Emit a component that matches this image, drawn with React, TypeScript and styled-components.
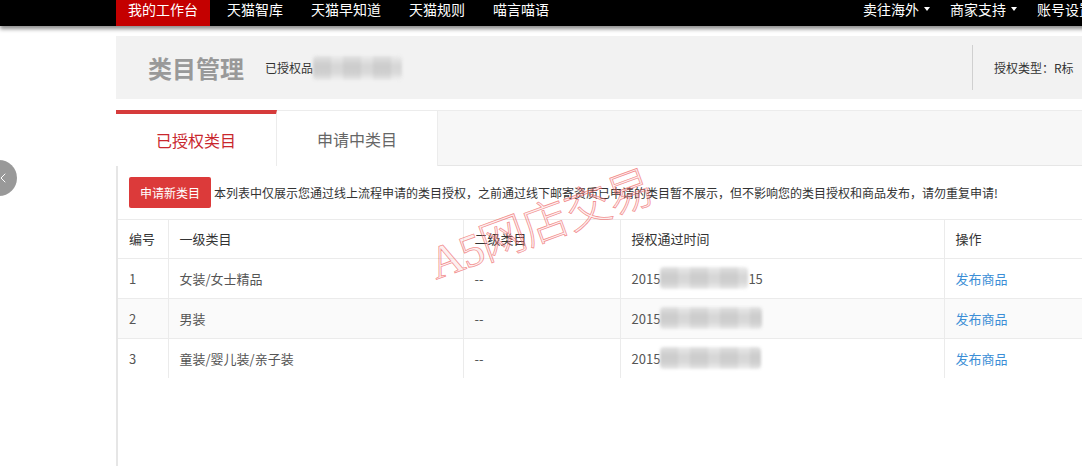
import React from 'react'
import styled, { createGlobalStyle } from 'styled-components'
import { ChevronLeft } from 'lucide-react'

const GlobalStyle = createGlobalStyle`
  html, body {
    margin: 0;
    padding: 0;
    background: #fff;
    overflow: hidden;
  }
  body {
    font-family: "Noto Sans CJK SC", "Microsoft YaHei", sans-serif;
    color: #333;
  }
`

const Page = styled.div`
  width: 1116px;
  position: relative;
`

const TopNav = styled.div`
  height: 26px;
  background: #000;
  display: flex;
  padding-left: 116px;
  box-shadow: 0 3px 4px rgba(0, 0, 0, 0.45);
  position: relative;
  z-index: 2;
`

const NavGroup = styled.div<{ $right?: boolean }>`
  display: flex;
  margin-left: ${({ $right }) => ($right ? 'auto' : '0')};
  margin-right: ${({ $right }) => ($right ? '2px' : '0')};
`

const NavItem = styled.div<{ $active?: boolean }>`
  display: flex;
  align-items: flex-start;
  gap: 5px;
  box-sizing: border-box;
  padding: 2px ${({ $active }) => ($active ? '12px' : '14px')} 0;
  margin-right: ${({ $active }) => ($active ? '3px' : '0')};
  background: ${({ $active }) => ($active ? '#c40000' : 'transparent')};
  color: #fff;
  font-size: 14px;
  line-height: 14px;
  height: 26px;
  white-space: nowrap;
`

const DropItem = styled(NavItem)`
  padding: 2px 10px 0;
`

const Caret = styled.span`
  width: 0;
  height: 0;
  margin-top: 5px;
  border-left: 3.5px solid transparent;
  border-right: 3.5px solid transparent;
  border-top: 4px solid #fff;
`

const Main = styled.div`
  margin-left: 116px;
  width: 1000px;
  padding-top: 10px;
`

const Header = styled.div`
  height: 63px;
  background: #f2f2f2;
  display: flex;
  align-items: center;
  padding-left: 32px;
`

const Title = styled.h1`
  margin: 0;
  font-size: 24px;
  font-weight: bold;
  color: #999;
  line-height: 30px;
`

const Sub = styled.div`
  margin-left: 21px;
  display: flex;
  align-items: center;
  font-size: 12px;
  color: #333;
`

const Blur = styled.span<{ $w: number; $h: number }>`
  display: inline-block;
  width: ${({ $w }) => $w}px;
  height: ${({ $h }) => $h}px;
  background:
    repeating-linear-gradient(90deg, rgba(0, 0, 0, 0.035) 0 18px, rgba(255, 255, 255, 0.08) 18px 30px),
    linear-gradient(180deg, #e9e9e9 0%, #d3d3d3 40%, #d6d6d6 70%, #eeeeee 100%);
  filter: blur(1.5px);
  border-radius: 4px;
`

const AuthInfo = styled.div`
  margin-left: auto;
  width: 144px;
  height: 45px;
  border-left: 1px solid #d0d0d0;
  box-sizing: border-box;
  padding-left: 21px;
  display: flex;
  align-items: center;
  font-size: 12px;
  color: #333;
  white-space: nowrap;
`

const Tabs = styled.div`
  margin-top: 11px;
  height: 56px;
  display: flex;
  background: #f7f7f7;
  border-top: 1px solid #ececec;
  border-bottom: 1px solid #e6e6e6;
  box-sizing: border-box;
`

const Tab = styled.div<{ $active?: boolean }>`
  width: 161px;
  margin-top: -1px;
  display: flex;
  align-items: center;
  justify-content: center;
  background: #fff;
  font-size: 16px;
  color: ${({ $active }) => ($active ? '#c9272d' : '#666')};
  border-top: ${({ $active }) => ($active ? '4px solid #d63b3b' : '1px solid #ececec')};
  border-right: 1px solid #ececec;
  box-sizing: border-box;
  margin-bottom: -1px;
`

const Panel = styled.div`
  position: relative;
  border-left: 2px solid #e6e6e6;
  min-height: 300px;
`

const Notice = styled.div`
  display: flex;
  align-items: center;
  gap: 3px;
  padding: 11px 0 11px 11px;
  font-size: 12px;
  color: #333;
  white-space: nowrap;
  border-bottom: 1px solid #ebebeb;
`

const RedButton = styled.button`
  height: 31px;
  width: 82px;
  border: none;
  border-radius: 2px;
  background: #dc3a3a;
  color: #fff;
  font-family: inherit;
  font-size: 12px;
  padding: 0;
  cursor: pointer;
`

const Table = styled.table`
  border-collapse: collapse;
  width: 100%;
  table-layout: fixed;
  font-size: 13px;
`

const Th = styled.th<{ $w?: number }>`
  box-sizing: border-box;
  width: ${({ $w }) => ($w ? `${$w}px` : 'auto')};
  height: 38px;
  padding: 0 11px;
  text-align: left;
  font-weight: normal;
  color: #333;
  border-bottom: 1px solid #ebebeb;
  border-left: 1px solid #ebebeb;
  &:first-child {
    border-left: none;
  }
`

const Tr = styled.tr<{ $alt?: boolean }>`
  background: ${({ $alt }) => ($alt ? '#fafafa' : '#fff')};
`

const Td = styled.td`
  height: 39px;
  padding: 0 11px;
  color: #555;
  border-bottom: 1px solid #ebebeb;
  border-left: 1px solid #ebebeb;
  white-space: nowrap;
  &:first-child {
    border-left: none;
  }
  ${Tr}:last-child & {
    border-bottom: none;
  }
`

const DateCell = styled.span`
  display: inline-flex;
  align-items: center;
`

const Link = styled.a`
  color: #3b8ed6;
  text-decoration: none;
`

const Watermark = styled.div`
  position: absolute;
  left: 304px;
  top: 22px;
  transform: rotate(-20deg);
  font-family: "Liberation Serif", "Noto Sans CJK SC", serif;
  font-size: 46px;
  font-weight: 300;
  color: rgba(245, 170, 170, 0.2);
  -webkit-text-stroke: 0.8px rgba(238, 100, 100, 0.7);
  white-space: nowrap;
  pointer-events: none;
  letter-spacing: -1px;
`

const SideToggle = styled.div`
  position: fixed;
  left: -19px;
  top: 160px;
  width: 36px;
  height: 36px;
  border-radius: 50%;
  background: #999;
  display: flex;
  align-items: center;
  justify-content: center;
  color: #fff;
`

const rows = [
  { id: 1, name: '女装/女士精品', tail: '15', blur: 88 },
  { id: 2, name: '男装', tail: '', blur: 102 },
  { id: 3, name: '童装/婴儿装/亲子装', tail: '', blur: 101 },
]

export default function App() {
  return (
    <Page>
      <GlobalStyle />
      <TopNav>
        <NavGroup>
          <NavItem $active>我的工作台</NavItem>
          <NavItem>天猫智库</NavItem>
          <NavItem>天猫早知道</NavItem>
          <NavItem>天猫规则</NavItem>
          <NavItem>喵言喵语</NavItem>
        </NavGroup>
        <NavGroup $right>
          <DropItem>
            卖往海外 <Caret />
          </DropItem>
          <DropItem>
            商家支持 <Caret />
          </DropItem>
          <DropItem>
            账号设置 <Caret />
          </DropItem>
        </NavGroup>
      </TopNav>

      <Main>
        <Header>
          <Title>类目管理</Title>
          <Sub>
            已授权品
            <Blur $w={89} $h={24} />
          </Sub>
          <AuthInfo>授权类型：R标</AuthInfo>
        </Header>

        <Tabs>
          <Tab $active>已授权类目</Tab>
          <Tab>申请中类目</Tab>
        </Tabs>

        <Panel>
          <Notice>
            <RedButton>申请新类目</RedButton>
            本列表中仅展示您通过线上流程申请的类目授权，之前通过线下邮寄资质已申请的类目暂不展示，但不影响您的类目授权和商品发布，请勿重复申请!
          </Notice>
          <Table>
            <thead>
              <tr>
                <Th $w={50}>编号</Th>
                <Th $w={295}>一级类目</Th>
                <Th $w={157}>二级类目</Th>
                <Th $w={324}>授权通过时间</Th>
                <Th>操作</Th>
              </tr>
            </thead>
            <tbody>
              {rows.map((r, i) => (
                <Tr key={r.id} $alt={i === 1}>
                  <Td>{r.id}</Td>
                  <Td>{r.name}</Td>
                  <Td>--</Td>
                  <Td>
                    <DateCell>
                      2015
                      <Blur $w={r.blur} $h={22} />
                      {r.tail}
                    </DateCell>
                  </Td>
                  <Td>
                    <Link href="#">发布商品</Link>
                  </Td>
                </Tr>
              ))}
            </tbody>
          </Table>
          <Watermark>A5网店交易</Watermark>
        </Panel>
      </Main>

      <SideToggle>
        <ChevronLeft size={16} strokeWidth={1.5} style={{ marginLeft: 8 }} />
      </SideToggle>
    </Page>
  )
}
